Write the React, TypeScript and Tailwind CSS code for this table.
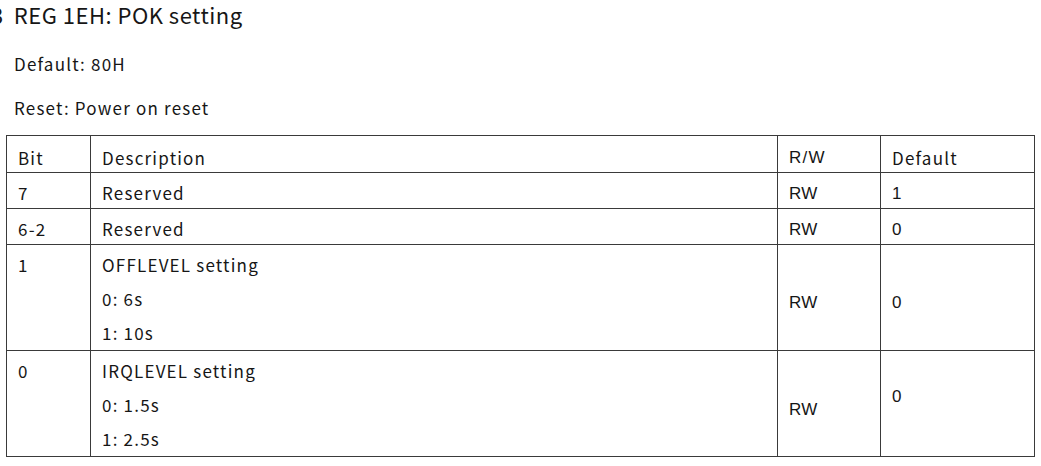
const rows = [
  { bit: "7", desc: ["Reserved"], rw: "RW", def: "1" },
  { bit: "6-2", desc: ["Reserved"], rw: "RW", def: "0" },
];

export default function App() {
  const cell = "border border-[#3a3a3a] align-top pl-[11px] pr-2";
  const arial = { fontFamily: '"Liberation Sans", Arial, sans-serif', letterSpacing: "0.3px" };

  return (
    <div
      className="w-[1041px] h-[466px] overflow-hidden bg-white text-[#161616] tracking-[1.2px]"
      style={{ fontFamily: '"Noto Sans CJK SC", "Noto Sans", sans-serif' }}
    >
      {/* heading, the section number is cut by the left edge */}
      <h2 className="flex text-[22px] leading-[28px] font-normal ml-[-9px] whitespace-nowrap tracking-[0.5px]">
        <span>3</span>
        <span className="ml-[10px]">REG 1EH: POK setting</span>
      </h2>
      <p className="text-[17px] leading-[24px] mt-[24px] pl-[14px]">Default: 80H</p>
      <p className="text-[17px] leading-[24px] mt-[20px] pl-[14px]">Reset: Power on reset</p>

      <table className="mt-[15px] ml-[6px] border-collapse table-fixed text-[17px]" style={{ width: 1029 }}>
        <colgroup>
          <col className="w-[84px]" />
          <col className="w-[687px]" />
          <col className="w-[103px]" />
          <col className="w-[154px]" />
        </colgroup>
        <tbody>
          <tr className="h-[37px]">
            <td className={`${cell} leading-[28px] pt-[8px]`}>Bit</td>
            <td className={`${cell} leading-[28px] pt-[8px]`}>Description</td>
            <td className={`${cell} leading-[20px] pt-[12px]`} style={{ ...arial, letterSpacing: "1.2px" }}>R/W</td>
            <td className={`${cell} leading-[28px] pt-[8px]`}>Default</td>
          </tr>
          {rows.map((r) => (
            <tr key={r.bit} className="h-[36px]">
              <td className={`${cell} leading-[28px] pt-[6px]`}>{r.bit}</td>
              <td className={`${cell} leading-[28px] pt-[6px]`}>{r.desc[0]}</td>
              <td className={`${cell} leading-[20px] pt-[11px]`} style={arial}>{r.rw}</td>
              <td className={`${cell} leading-[20px] pt-[11px]`} style={arial}>{r.def}</td>
            </tr>
          ))}
          <tr className="h-[106px]">
            <td className={`${cell} leading-[34px] pt-[3px]`}>1</td>
            <td className={`${cell} leading-[34px] pt-[3px]`}>
              <div>OFFLEVEL setting</div>
              <div>0: 6s</div>
              <div>1: 10s</div>
            </td>
            <td className={`${cell} leading-[20px] pt-[48px]`} style={arial}>RW</td>
            <td className={`${cell} leading-[20px] pt-[48px]`} style={arial}>0</td>
          </tr>
          <tr className="h-[106px]">
            <td className={`${cell} leading-[34px] pt-[3px]`}>0</td>
            <td className={`${cell} leading-[34px] pt-[3px]`}>
              <div>IRQLEVEL setting</div>
              <div>0: 1.5s</div>
              <div>1: 2.5s</div>
            </td>
            <td className={`${cell} leading-[20px] pt-[49px]`} style={arial}>RW</td>
            <td className={`${cell} leading-[20px] pt-[36px]`} style={arial}>0</td>
          </tr>
        </tbody>
      </table>
    </div>
  );
}
